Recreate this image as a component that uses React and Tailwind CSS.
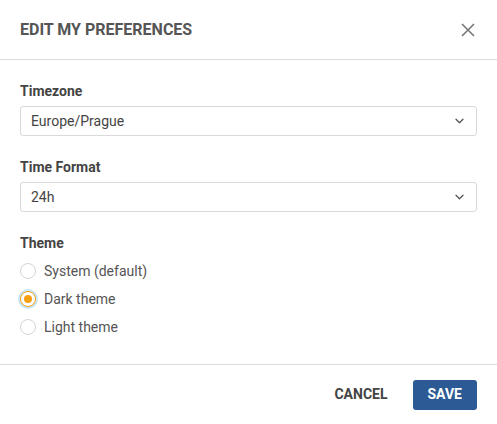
import React from "react";

function Chevron() {
  return (
    <svg width="9" height="6" viewBox="0 0 9 6" className="shrink-0">
      <path d="M1 1.2l3.5 3.5 3.5-3.5" fill="none" stroke="#555" strokeWidth="1.3" strokeLinecap="round" strokeLinejoin="round" />
    </svg>
  );
}

function Select({ value }) {
  return (
    <div className="h-[30px] border border-[#d9d9d9] rounded-[3px] flex items-center justify-between pl-[10px] pr-[12px] text-[14px] text-[#444] bg-white">
      <span>{value}</span>
      <Chevron />
    </div>
  );
}

function Radio({ label, checked }) {
  return (
    <div className="h-[28px] flex items-center gap-[8px]">
      {checked ? (
        <span className="w-[16px] h-[16px] rounded-full border border-[#f5a012] flex items-center justify-center ring-2 ring-[#c9e6f7] bg-white">
          <span className="w-[8px] h-[8px] rounded-full bg-[#f5a012]" />
        </span>
      ) : (
        <span className="w-[16px] h-[16px] rounded-full border border-[#d4d4d4] bg-white" />
      )}
      <span className="text-[14px] text-[#555]">{label}</span>
    </div>
  );
}

export default function App() {
  return (
    <div className="w-[497px] h-[424px] bg-white flex flex-col" style={{ fontFamily: "Roboto, 'Liberation Sans', sans-serif" }}>
      <div className="h-[60px] shrink-0 flex items-center justify-between px-5 border-b border-[#dcdcdc]">
        <span className="text-[16px] font-bold text-[#555]">EDIT MY PREFERENCES</span>
        <svg width="14" height="14" viewBox="0 0 14 14" className="mr-[2px]">
          <path d="M1 1l12 12M13 1L1 13" stroke="#777" strokeWidth="1.6" />
        </svg>
      </div>
      <div className="flex-1 px-5 pt-[23px] pb-[23px] flex flex-col">
        <div className="text-[14px] font-bold text-[#444] leading-[16px] mb-[7px]">Timezone</div>
        <Select value="Europe/Prague" />
        <div className="text-[14px] font-bold text-[#444] leading-[16px] mb-[7px] mt-[23px]">Time Format</div>
        <Select value="24h" />
        <div className="text-[14px] font-bold text-[#444] leading-[16px] mt-[23px] mb-[6px]">Theme</div>
        <Radio label="System (default)" />
        <Radio label="Dark theme" checked />
        <Radio label="Light theme" />
      </div>
      <div className="h-[60px] shrink-0 border-t border-[#dcdcdc] flex items-center justify-end px-5 gap-[25px]">
        <span className="text-[14px] font-bold text-[#444]">CANCEL</span>
        <button className="h-[30px] px-[15px] rounded-[3px] bg-[#2c5a94] text-white text-[14px] font-bold">SAVE</button>
      </div>
    </div>
  );
}
